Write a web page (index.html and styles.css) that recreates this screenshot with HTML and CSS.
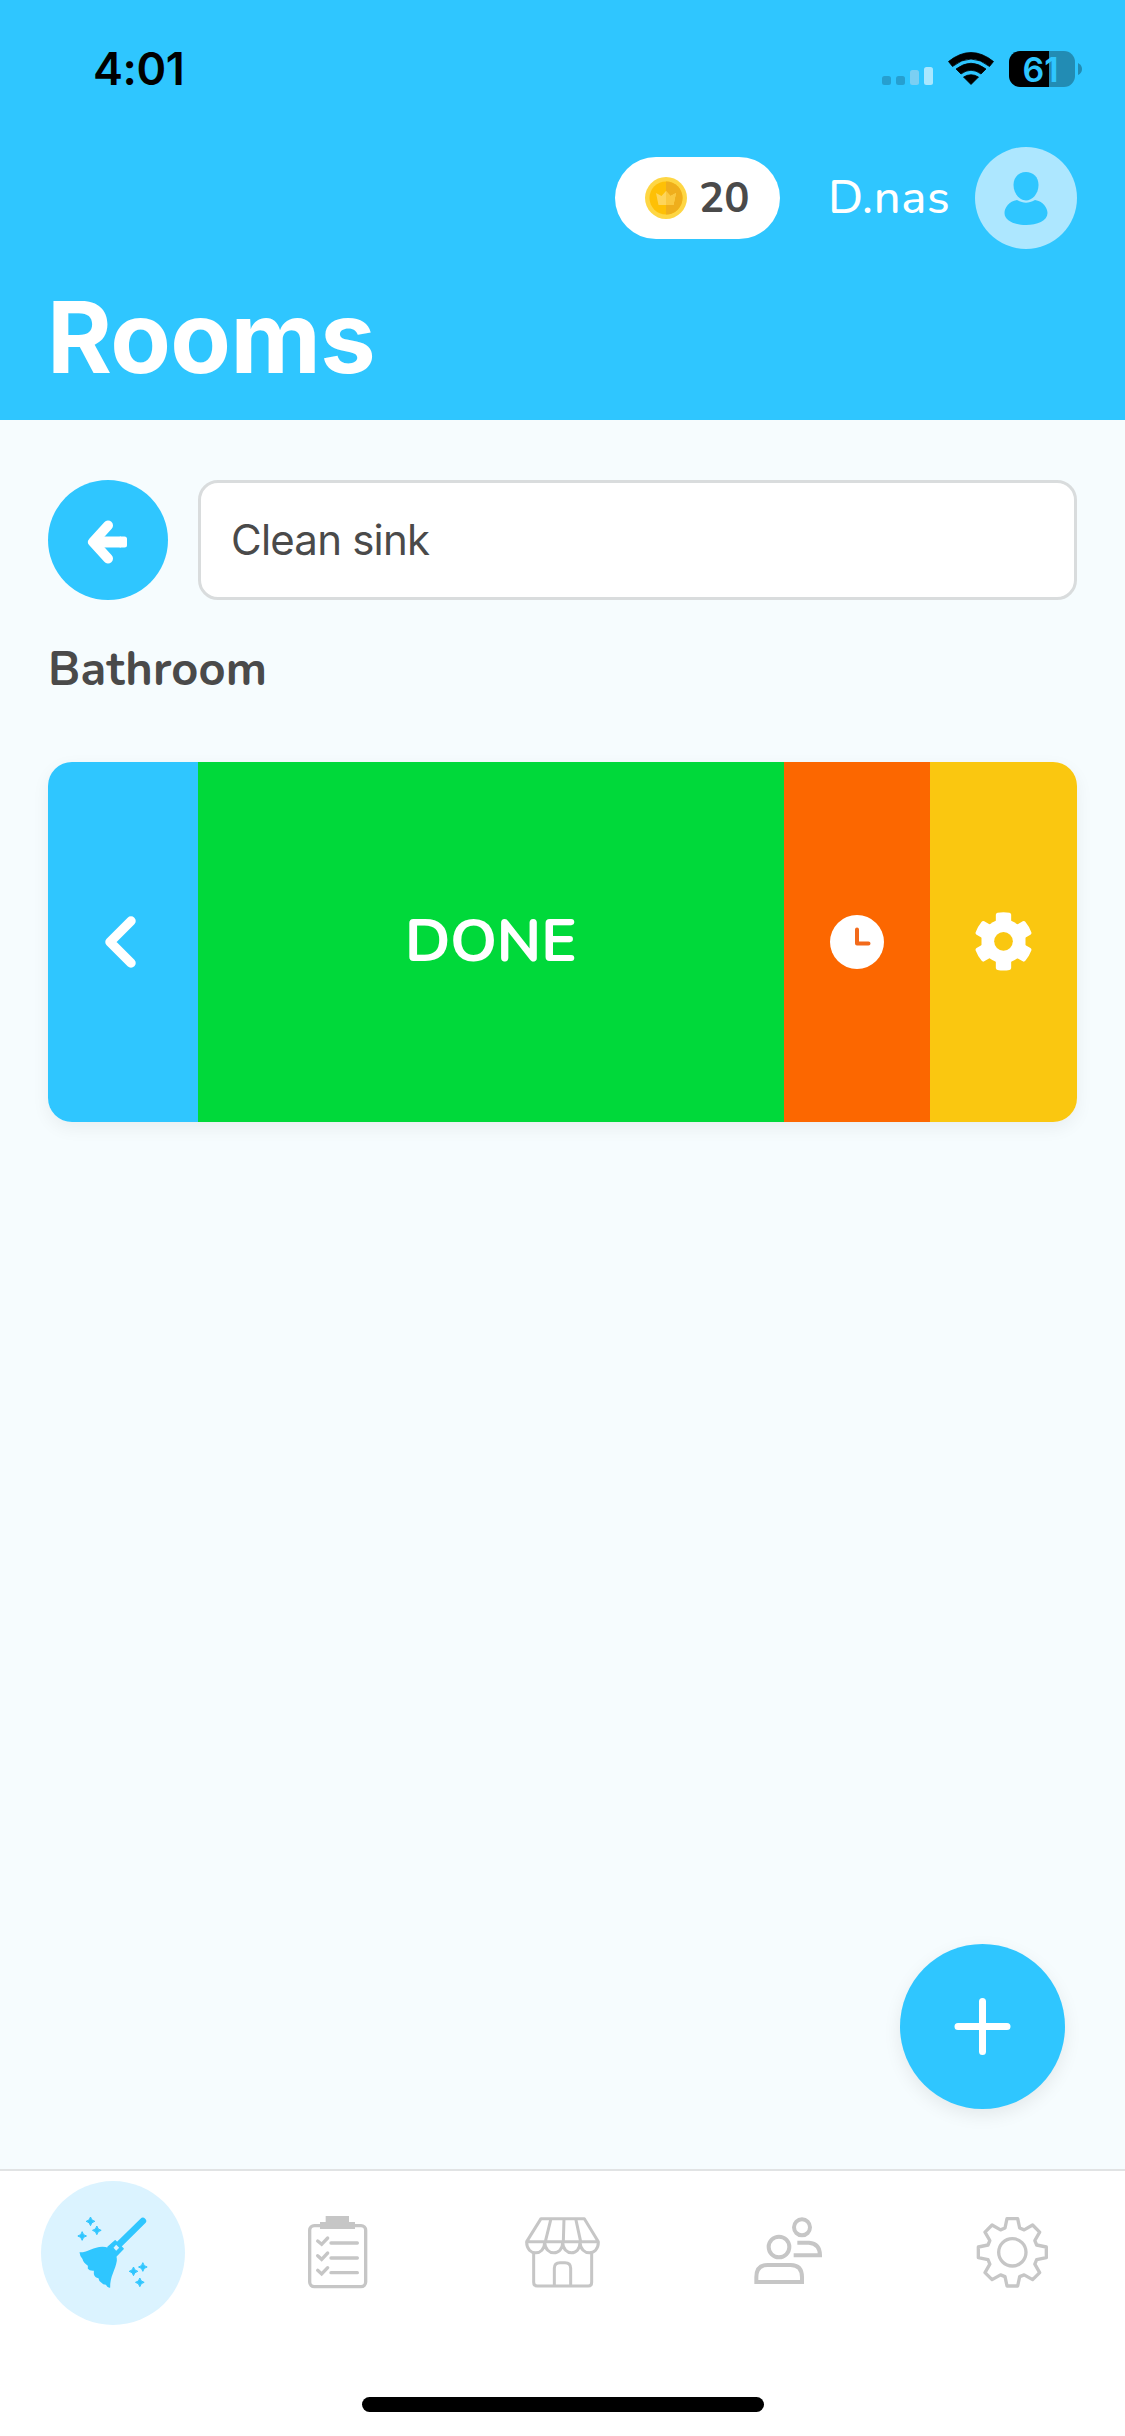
FILE: index.html
```html
<!DOCTYPE html>
<html lang="en">
<head>
<meta charset="utf-8">
<title>Rooms</title>
<link rel="stylesheet" href="styles.css">
</head>
<body>
<div class="app">
  <header class="header">
    <div class="status">
      <span class="time">4:01</span>
      <div class="indicators">
        <svg width="112" height="36" viewBox="882 51 112 36">
          <rect x="882" y="76" width="9" height="9" rx="2.5" fill="#269fd0"/>
          <rect x="896" y="76" width="9" height="9" rx="2.5" fill="#269fd0"/>
          <rect x="910" y="70" width="9" height="15" rx="2.5" fill="#7bcff3"/>
          <rect x="924" y="67" width="9" height="18" rx="2.5" fill="#a9e7ff"/>
          <path d="M948.500 61.500Q971 43.500 993.500 61.500L989.500 66.500Q971 51.500 952.500 66.500ZM956 69Q971 57.500 986 69L981 74Q971 66.500 961 74ZM963.500 77Q971 72.500 978.500 77L971 84.500Z" fill="#000" stroke="#000" stroke-width=".8" stroke-linejoin="round"/>
        </svg>
        <div class="battery"><span class="level">61</span></div>
        <svg class="tip" width="5" height="12" viewBox="0 0 5 12"><path d="M0 0Q4 2 4 6T0 12Z" fill="#228cb4"/></svg>
      </div>
    </div>
    <div class="account">
      <div class="coins">
        <svg width="42" height="42" viewBox="0 0 42 42">
          <circle cx="21" cy="21" r="21" fill="#fed644"/>
          <circle cx="21" cy="21" r="16.500" fill="#fec006"/>
          <path d="M21 4.500a16.500 16.500 0 0 1 0 33Z" fill="#efae1c"/>
          <path d="M11 16l5.500 3L21 14l4.500 5 5.500-3-2.500 12h-15Z" fill="#fed55b"/>
          <path d="M21 14l4.500 5 5.500-3-2.500 12H21Z" fill="#fac83f"/>
        </svg>
        <span class="amount">20</span>
      </div>
      <span class="user">D.nas</span>
      <svg class="avatar" width="102" height="102" viewBox="0 0 102 102">
        <circle cx="51" cy="51" r="51" fill="#ade7ff"/>
        <path d="M38.500 38C38.500 30 44 25 51 25S63.500 30 63.500 38C63.500 47 57 53.500 51 53.500S38.500 47 38.500 38Z" fill="#2fc6ff"/>
        <path d="M42 53C49 56.500 53 56.500 60 53C68 54 72.500 61 72.500 66C72.500 74 62 78 51 78S29.500 74 29.500 66C29.500 61 34 54 42 53Z" fill="#2fc6ff"/>
      </svg>
    </div>
    <h1 class="title">Rooms</h1>
  </header>

  <main class="content">
    <div class="search">
      <button class="back" aria-label="Back">
        <svg width="42" height="44" viewBox="0 0 42 44" fill="none" stroke="#fff" stroke-linejoin="round">
          <path d="M21 5.500L6 22L21 38.500" stroke-width="10" stroke-linecap="round"/>
          <path d="M8 22H34" stroke-width="11"/>
          <path d="M34 19H37.500V25H34Z" fill="#fff" stroke-width="5"/>
        </svg>
      </button>
      <div class="field">Clean sink</div>
    </div>
    <h2 class="room">Bathroom</h2>
    <div class="actions">
      <div class="action prev">
        <svg width="36" height="52" viewBox="1 0 36 52"><path d="M27 5L6 26L27 47" fill="none" stroke="#fff" stroke-width="9.500" stroke-linecap="round" stroke-linejoin="round"/></svg>
      </div>
      <div class="action done">DONE</div>
      <div class="action later">
        <svg width="54" height="54" viewBox="0 0 54 54"><circle cx="27" cy="27" r="27" fill="#fff"/><path d="M27 14.500V28.500H38.500" fill="none" stroke="#f26a1b" stroke-width="4" stroke-linecap="round" stroke-linejoin="round"/></svg>
      </div>
      <div class="action setup">
        <svg width="60" height="60" viewBox="-88.500 -88 180 180" fill="#fff">
          <path d="M-65 -28L-43 -50Q0 -82 43 -50L66 -15V15L43 50Q0 82 -43 50L-66 15V-15Z"/>
          <path id="tooth" d="M-18 -86Q0 -89 18 -86Q23 -85 23 -80V80Q23 85 18 86Q0 89 -18 86Q-23 85 -23 80V-80Q-23 -85 -18 -86Z"/>
          <use href="#tooth" transform="rotate(60)"/>
          <use href="#tooth" transform="rotate(120)"/>
          <circle r="28" fill="#fac710"/>
        </svg>
      </div>
    </div>
    <button class="add" aria-label="Add">
      <svg width="58" height="57" viewBox="0 0 58 57"><path d="M28.500 3.500V53.500M4 28.500H53" stroke="#fff" stroke-width="7" stroke-linecap="round"/></svg>
    </button>
  </main>

  <nav class="tabs">
    <a class="tab">
      <svg width="144" height="144" viewBox="31.500 63 432 432" fill="#2fc6ff">
        <circle cx="247.500" cy="279" r="216" fill="#dbf3ff"/>
        <path d="M337 183L262 257" stroke="#2fc6ff" stroke-width="20" stroke-linecap="round"/>
        <path d="M254 242L278 266L257 288L232 262Z" stroke="#2fc6ff" stroke-width="4" stroke-linejoin="round"/>
        <path d="M147 277C176 277 187 260 216 260C229 260 238 264 243 270L252 280Q260 288 259 302C255 329 238 349 239 383Q231 384 226 374Q217 374 213 368Q205 365 204 355Q193 353 190 342L190 332Q177 333 172 326V317Q158 308 156 297Q148 289 147 277Z"/>
        <path d="M257 254l9 9-9 9-8-9Z" fill="#dbf3ff"/>
        <path id="spark" d="M180 171Q182 182 193 184Q182 186 180 197Q178 186 167 184Q178 182 180 171Z" stroke="#2fc6ff" stroke-width="3"/>
        <use href="#spark" x="19" y="27"/>
        <use href="#spark" x="-25" y="44"/>
        <use href="#spark" x="129" y="150"/>
        <use href="#spark" x="157" y="137"/>
        <use href="#spark" x="148" y="183"/>
      </svg>
    </a>
    <a class="tab">
      <svg width="120" height="120" viewBox="-6 9 360 360" fill="none" stroke="#c6c6c6">
        <rect x="89" y="107" width="168" height="183" rx="14" stroke-width="10"/>
        <path d="M120 96h17v-18h70v18h18v21h-105Z" fill="#c6c6c6" stroke="none"/>
        <path d="M153 159H232M153 204H232M153 248H232" stroke-width="10" stroke-linecap="round"/>
        <path d="M113 153L125 163L143 144M113 197L125 208L143 189M113 241L125 252L143 233" stroke-width="10" stroke-linecap="round"/>
      </svg>
    </a>
    <a class="tab">
      <svg width="120" height="120" viewBox="9 9 360 360" fill="none" stroke="#c6c6c6" stroke-width="9" stroke-linejoin="round">
        <path d="M80 155L123 86H253L295 155ZM136 155L153 86M190 155L192 86M242 155L227 86"/>
        <path d="M80 157C80 199 134 199 134 157C136 199 188 199 188 157C190 199 240 199 240 157C242 199 295 199 295 157"/>
        <path d="M101 188V277Q101 288 112 288H265Q275 288 275 277V188M163 288V235Q163 218 180 218H195Q212 218 212 235V288"/>
      </svg>
    </a>
    <a class="tab">
      <svg width="120" height="120" viewBox="-21 9 360 360" fill="none" stroke="#c6c6c6" stroke-width="12">
        <circle cx="132" cy="171" r="31"/>
        <circle cx="201" cy="112" r="24"/>
        <path d="M64 276V262Q64 225 98 225H167Q201 225 201 262V276Z"/>
        <path d="M187 158H222Q255 161 255 196H176"/>
      </svg>
    </a>
    <a class="tab">
      <svg width="120" height="120" viewBox="9 9 360 360" fill="none" stroke="#c6c6c6" stroke-width="10" stroke-linejoin="round">
        <g transform="translate(187 187)">
          <circle r="41"/>
          <path d="M-22 -73L-16 -101H16L22 -73L35.400 -67.500L60.800 -82L82 -60.800L67.500 -35.400L73 -22L102 -16V16L73 22L67.500 35.400L82 60.800L60.800 82L35.400 67.500L22 73L16 101H-16L-22 73L-35.400 67.500L-60.800 82L-82 60.800L-67.500 35.400L-73 22L-102 16V-16L-73 -22L-67.500 -35.400L-82 -60.800L-60.800 -82L-35.400 -67.500Z"/>
        </g>
      </svg>
    </a>
  </nav>
  <footer class="home"><span class="home-bar"></span></footer>
</div>
</body>
</html>
```
FILE: styles.css
```css
* {
  box-sizing: border-box;
}

body {
  margin: 0;
  font-family: "Nunito", "Lato", sans-serif;
  color: #4a4a4a;
}

svg {
  display: block;
  flex: none;
}

button {
  border: 0;
  padding: 0;
}

.app {
  width: 1125px;
  height: 2436px;
  display: flex;
  flex-direction: column;
  background: #f6fcfe;
}

.header {
  height: 420px;
  background: #2fc6ff;
  color: #fff;
}

.status {
  height: 147px;
  padding: 51px 42px 0 93px;
  display: flex;
  justify-content: space-between;
  color: #000;
}

.time {
  font: 600 45px/36px "Inter", sans-serif;
  letter-spacing: -0.4px;
}

.indicators {
  display: flex;
  height: 36px;
}

.battery {
  width: 66px;
  height: 36px;
  margin-left: 15px;
  border-radius: 11px;
  background: linear-gradient(90deg, #000 40px, #228cb4 40px);
  display: flex;
  justify-content: center;
}

.level {
  font: 600 34px/37px "Inter", sans-serif;
  margin-left: -3px;
  color: #2fc6ff;
}

.tip {
  margin: 12px 0 0 3px;
}

.account {
  height: 102px;
  padding-right: 48px;
  display: flex;
  align-items: center;
  justify-content: flex-end;
}

.coins {
  width: 165px;
  height: 82px;
  border-radius: 41px;
  background: #fff;
  padding-left: 30px;
  display: flex;
  align-items: center;
}

.amount {
  margin: 2px 0 0 12px;
  font-size: 42px;
  font-weight: 700;
  line-height: 50px;
  color: #4a4a4a;
}

.user {
  margin-left: 48px;
  font-size: 47px;
  font-weight: 500;
  line-height: 56px;
  letter-spacing: 0.7px;
  width: 120px;
  white-space: nowrap;
}

.avatar {
  margin-left: 27px;
}

.title {
  margin: 26px 0 0 47px;
  font: 700 99px/124px "Inter", sans-serif;
  letter-spacing: -0.6px;
}

.content {
  flex: 1;
  padding: 60px 48px 0;
  display: flex;
  flex-direction: column;
}

.search {
  display: flex;
  gap: 30px;
}

.back {
  width: 120px;
  height: 120px;
  border-radius: 50%;
  background: #2fc6ff;
  display: flex;
  align-items: center;
  justify-content: center;
}

.back svg {
  margin-top: 3px;
}

.field {
  flex: 1;
  height: 120px;
  border: 3px solid #d9dcdd;
  border-radius: 20px;
  background: #fff;
  padding-left: 30px;
  font: 400 42px/114px "Inter", sans-serif;
  letter-spacing: -0.8px;
}

.room {
  margin: 41px 0 0;
  height: 121px;
  font-size: 47px;
  font-weight: 700;
  line-height: 58px;
  letter-spacing: 0.2px;
}

.actions {
  height: 360px;
  display: grid;
  grid-template-columns: 150px 586px 146px 147px;
  border-radius: 24px;
  overflow: hidden;
  box-shadow: 0 6px 18px rgba(0, 0, 0, 0.06);
}

.action {
  display: flex;
  align-items: center;
  justify-content: center;
}

.prev {
  background: #2fc6ff;
}

.done {
  background: #00d93a;
  color: #fff;
  font-size: 60px;
  font-weight: 700;
  letter-spacing: -0.5px;
  padding: 0 1px 3px 0;
}

.later {
  background: #fc6700;
}

.setup {
  background: #fac710;
}

.add {
  width: 165px;
  height: 165px;
  margin: auto 12px 60px auto;
  border-radius: 50%;
  background: #2fc6ff;
  display: flex;
  align-items: center;
  justify-content: center;
  box-shadow: 0 6px 18px rgba(0, 0, 0, 0.08);
}

.tabs {
  height: 168px;
  border-top: 2px solid #e1e3e4;
  background: #fff;
  display: grid;
  grid-template-columns: repeat(5, 1fr);
}

.tab {
  height: 164px;
  display: flex;
  align-items: center;
  justify-content: center;
}

.home {
  height: 99px;
  background: #fff;
  display: flex;
  align-items: flex-end;
  justify-content: center;
  padding-bottom: 24px;
}

.home-bar {
  width: 402px;
  height: 15px;
  border-radius: 8px;
  background: #000;
}
```
